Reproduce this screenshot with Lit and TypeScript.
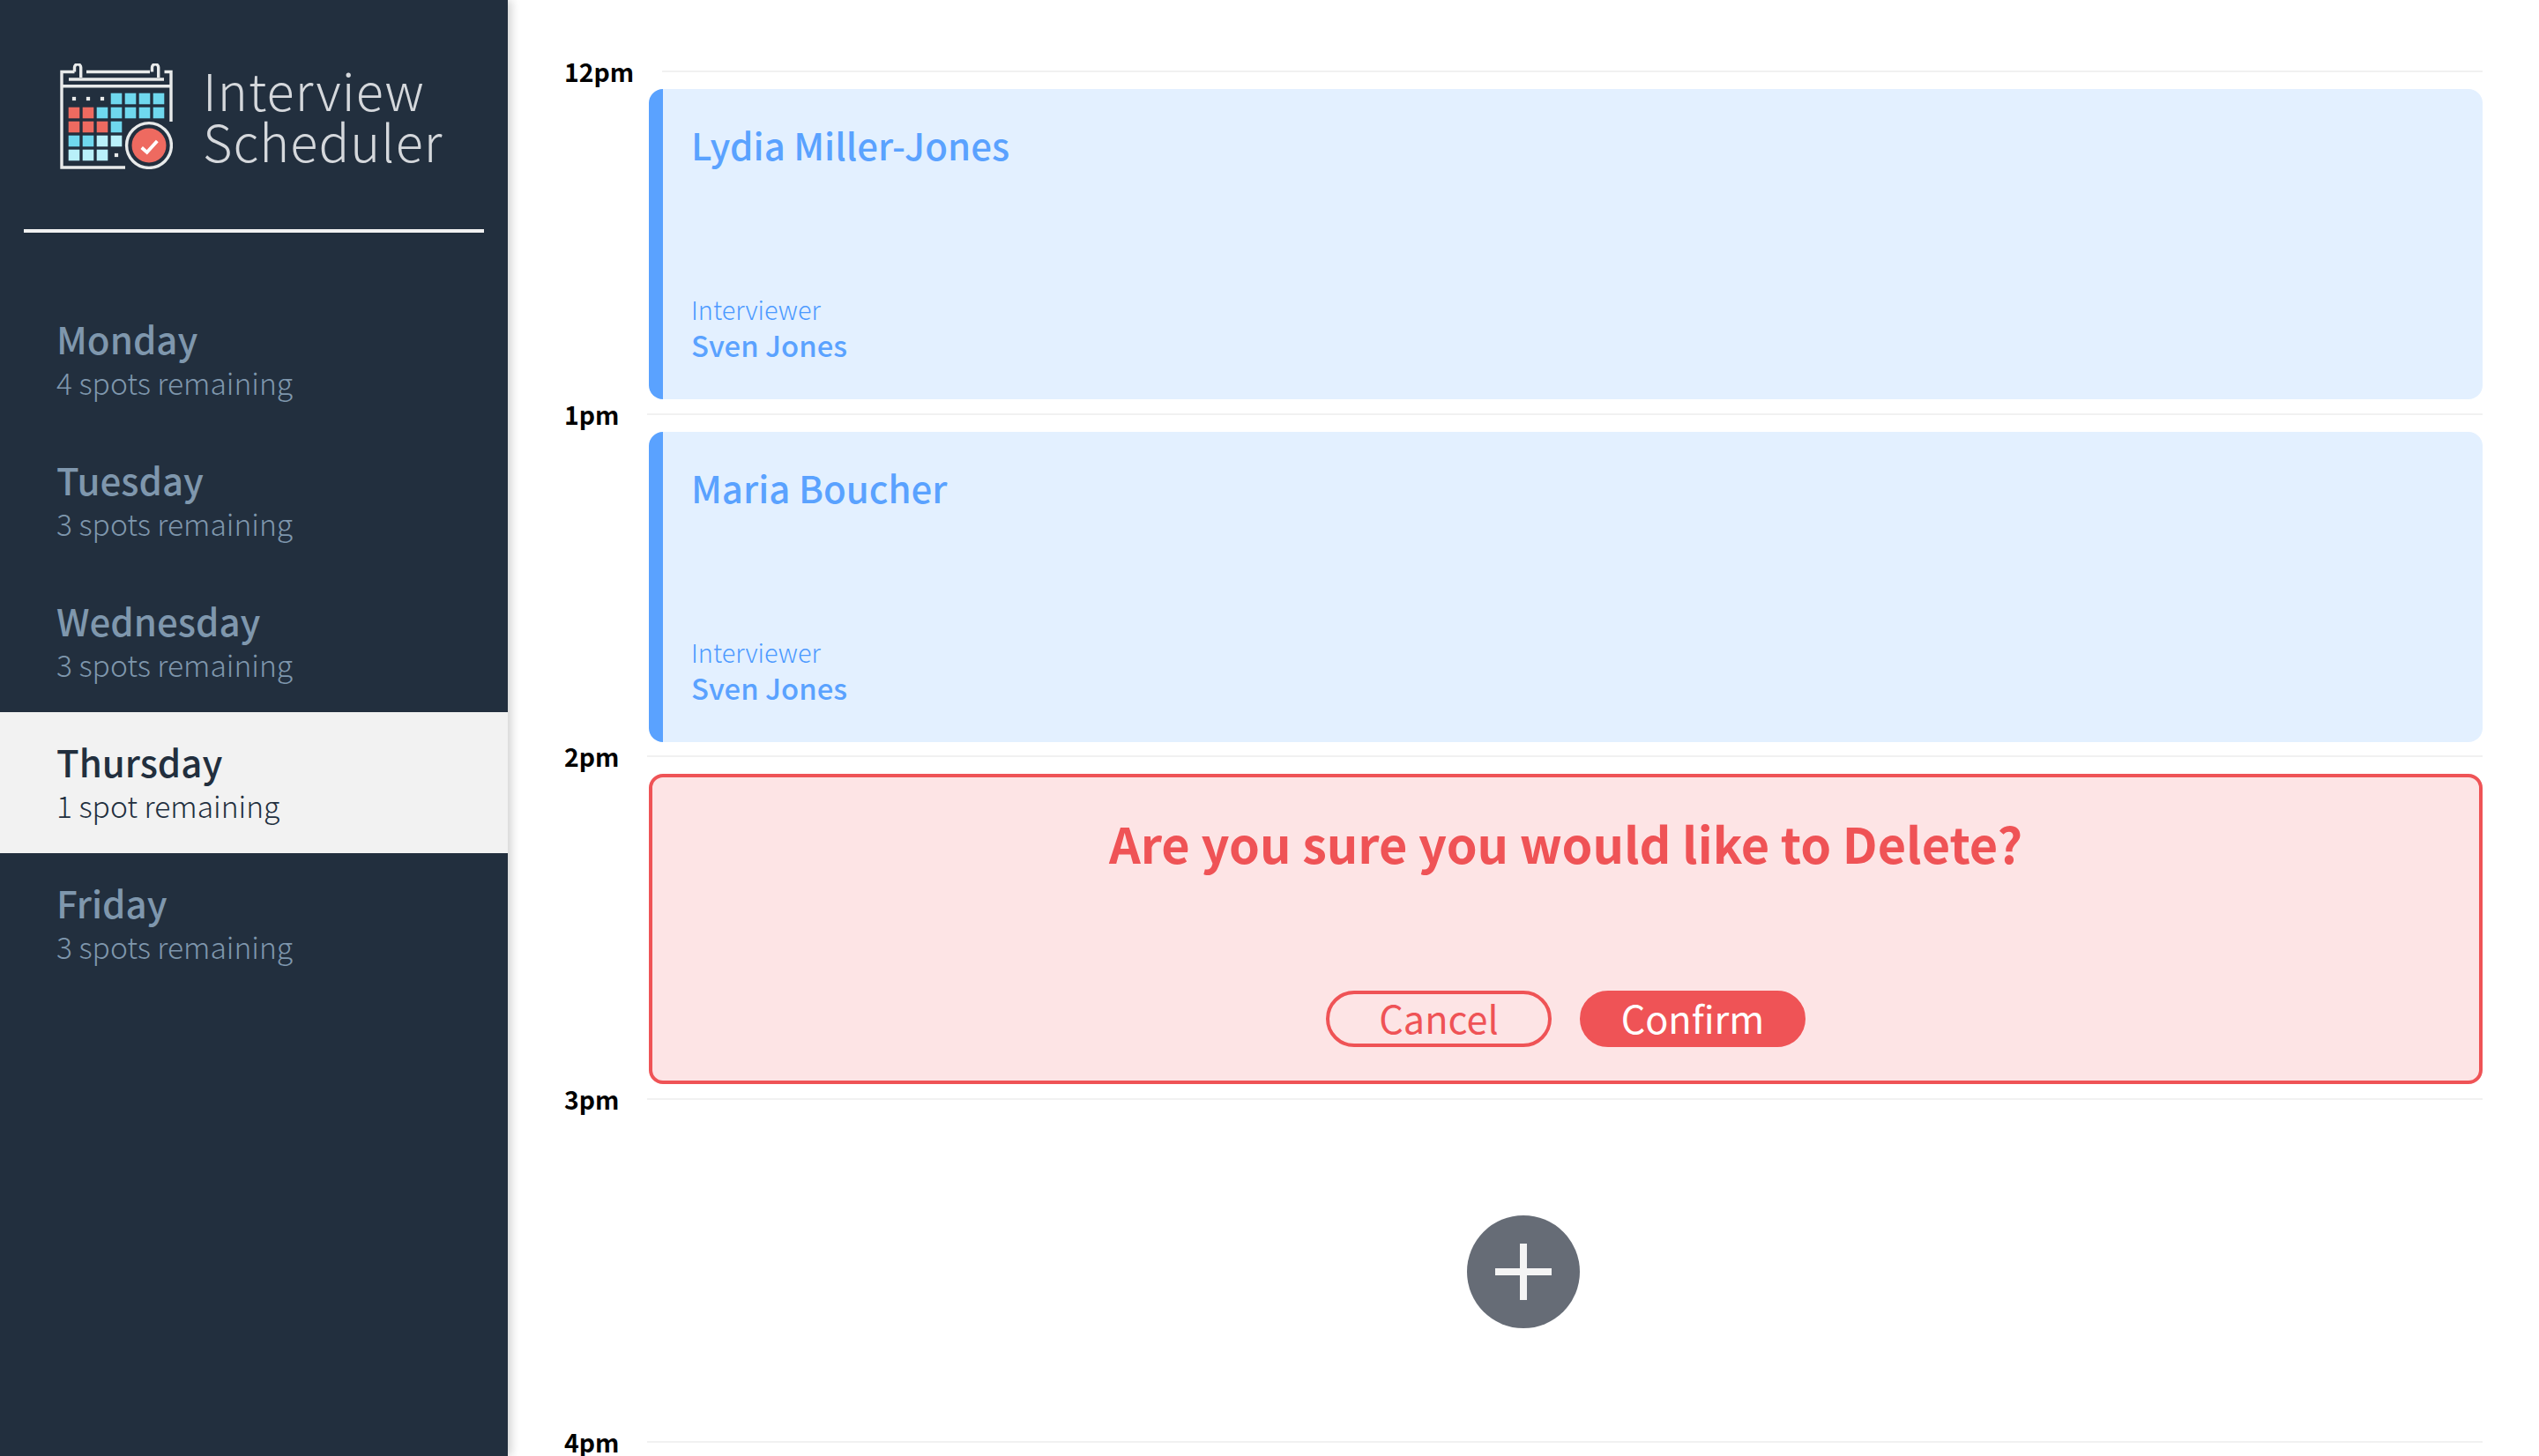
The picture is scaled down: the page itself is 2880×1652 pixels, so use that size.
import { css, html, LitElement, svg } from "lit";
import { customElement } from "lit/decorators.js";

const BLUE = "#6fd8ee";
const RED = "#ee6a60";
const LIGHT = "#b9f0fa";
const FRAME = "#e8eaea";

// d = dot, otherwise a fill colour; null leaves the cell empty
const GRID: (string | null)[][] = [
  ["d", "d", "d", BLUE, BLUE, BLUE, BLUE],
  [RED, RED, BLUE, BLUE, BLUE, BLUE, BLUE],
  [RED, RED, RED, BLUE, null, null, null],
  [BLUE, BLUE, LIGHT, LIGHT, null, null, null],
  [LIGHT, LIGHT, LIGHT, "d", null, null, null],
];

const DAYS = [
  { name: "Monday", spots: "4 spots remaining" },
  { name: "Tuesday", spots: "3 spots remaining" },
  { name: "Wednesday", spots: "3 spots remaining" },
  { name: "Thursday", spots: "1 spot remaining", selected: true },
  { name: "Friday", spots: "3 spots remaining" },
];

const logo = html`
  <svg class="logo" viewBox="0 0 128 120" width="128" height="120" fill="none">
    <g stroke=${FRAME} stroke-width="3.4">
      <path d="M74 118H2V9.5H16.5" />
      <path d="M30 9.5H102" />
      <path d="M118.5 9.5H126V66" />
      <path d="M10 18H118" />
      <path d="M2 25.7H126" />
      <path d="M16.5 9.5V4.5A3.6 3.6 0 1 1 23.7 4.5V16" />
      <path d="M104.5 9.5V4.5A3.6 3.6 0 1 1 111.7 4.5V16" />
    </g>
    ${GRID.map((row, r) =>
      row.map((cell, c) => {
        const x = 9.7 + c * 16;
        const y = 33.7 + r * 16;
        if (!cell) return null;
        if (cell === "d") {
          return svg`<rect x=${x + 4.2} y=${y + 4.2} width="4.2" height="4.2" fill=${FRAME} />`;
        }
        return svg`<rect x=${x} y=${y} width="12.6" height="12.6" fill=${cell} />`;
      })
    )}
    <circle cx="101" cy="93" r="25.4" stroke=${FRAME} stroke-width="3.4" fill="#222f3e" />
    <circle cx="101" cy="93" r="19.5" fill=${RED} />
    <path d="M92.7 95.5L98.7 100.8L110.3 88" stroke="#fff" stroke-width="3.8" />
  </svg>
`;

@customElement("app-root")
export class AppRoot extends LitElement {
  static styles = css`
    :host {
      display: flex;
      width: 2880px;
      height: 1652px;
      overflow: hidden;
      background: #fff;
      font-family: "Noto Sans CJK SC", "Noto Sans", sans-serif;
      color: #222f3e;
    }

    .sidebar {
      width: 576px;
      flex: none;
      background: #222f3e;
      box-shadow: 4px 0 10px rgba(0, 0, 0, 0.18);
      position: relative;
    }

    .brand {
      display: flex;
      gap: 34px;
      height: 260px;
      padding: 72px 0 0 68px;
      box-sizing: border-box;
    }

    .brand .logo {
      flex: none;
    }

    .brand h1 {
      margin: 0;
      font-size: 57.6px;
      line-height: 58px;
      font-weight: 300;
      letter-spacing: 1.1px;
      color: #d5d8dc;
    }

    .divider {
      height: 4px;
      margin: 0 27px 64px;
      background: #f1f1f1;
    }

    .day {
      height: 160px;
      box-sizing: border-box;
      padding: 28px 0 0 64px;
      color: #7f97ad;
    }

    .day.selected {
      background: #f2f2f2;
      color: #222f3e;
    }

    .day h2 {
      margin: 0;
      font-size: 42px;
      line-height: 56px;
      font-weight: 500;
    }

    .day p {
      margin: 2px 0 0;
      font-size: 33.6px;
      line-height: 40px;
      font-weight: 300;
    }

    .schedule {
      flex: 1;
      padding: 65px 64px 0;
    }

    .slot {
      padding-bottom: 0.5px;
    }

    .slot:last-child {
      margin-top: 0.5px;
    }

    .slot-head {
      display: flex;
      height: 32px;
      margin-bottom: 4px;
    }

    .slot-head h4 {
      margin: 0;
      font-size: 28.4px;
      line-height: 31px;
      font-weight: 700;
      color: #000;
    }

    .slot-head hr {
      flex: 1;
      height: 2px;
      margin: 15px 0 0 32px;
      border: 0;
      background: #f1f1f1;
    }

    .body {
      height: 352px;
      margin-left: 96px;
      box-sizing: border-box;
    }

    .show {
      display: flex;
      flex-direction: column;
      justify-content: space-between;
      padding: 35px 32px 40.6px;
      border-left: 16px solid #5aa2ff;
      border-radius: 16px;
      background: #e3f0ff;
      color: #5aa2ff;
    }

    .show h2 {
      margin: 0;
      font-size: 42px;
      line-height: 56px;
      font-weight: 500;
    }

    .show .label {
      margin: 0;
      font-size: 28.8px;
      line-height: 36px;
      font-weight: 300;
      color: #4c9aff;
    }

    .show .name {
      margin: 1px 0 0;
      font-size: 32.8px;
      line-height: 42px;
      font-weight: 500;
    }

    .confirm {
      display: flex;
      flex-direction: column;
      align-items: center;
      justify-content: space-between;
      padding: 37.6px 0 38px;
      border: 4px solid #ef5356;
      border-radius: 16px;
      background: #fde4e5;
      color: #ef5356;
    }

    .confirm h1 {
      margin: 0;
      font-size: 55.8px;
      line-height: 72px;
      font-weight: 700;
    }

    .actions {
      display: flex;
      gap: 32px;
    }

    .actions button {
      width: 256px;
      height: 64px;
      box-sizing: border-box;
      padding: 0 0 4px;
      border: 4px solid #ef5356;
      border-radius: 32px;
      font: inherit;
      font-size: 43.2px;
      line-height: 48px;
      cursor: pointer;
    }

    .cancel {
      background: transparent;
      color: #ef5356;
    }

    .ok {
      background: #ef5356;
      color: #fff;
    }

    .add {
      display: flex;
      align-items: center;
      justify-content: center;
      padding-right: 96px;
    }

    .add button {
      width: 128px;
      height: 128px;
      padding: 0;
      border: 0;
      border-radius: 50%;
      background: #666c76;
      display: flex;
      align-items: center;
      justify-content: center;
      cursor: pointer;
    }
  `;

  private renderInterview(student: string) {
    return html`
      <div class="body show">
        <h2>${student}</h2>
        <div>
          <p class="label">Interviewer</p>
          <p class="name">Sven Jones</p>
        </div>
      </div>
    `;
  }

  private renderHead(time: string) {
    return html`
      <div class="slot-head">
        <h4>${time}</h4>
        <hr />
      </div>
    `;
  }

  render() {
    return html`
      <aside class="sidebar">
        <div class="brand">
          ${logo}
          <h1>Interview<br />Scheduler</h1>
        </div>
        <div class="divider"></div>
        <nav>
          ${DAYS.map(
            (d) => html`
              <div class="day ${d.selected ? "selected" : ""}">
                <h2>${d.name}</h2>
                <p>${d.spots}</p>
              </div>
            `
          )}
        </nav>
      </aside>
      <main class="schedule">
        <section class="slot">${this.renderHead("12pm")}${this.renderInterview("Lydia Miller-Jones")}</section>
        <section class="slot">${this.renderHead("1pm")}${this.renderInterview("Maria Boucher")}</section>
        <section class="slot">
          ${this.renderHead("2pm")}
          <div class="body confirm">
            <h1>Are you sure you would like to Delete?</h1>
            <div class="actions">
              <button class="cancel">Cancel</button>
              <button class="ok">Confirm</button>
            </div>
          </div>
        </section>
        <section class="slot">
          ${this.renderHead("3pm")}
          <div class="body add">
            <button aria-label="Add">
              <svg viewBox="0 0 64 64" width="64" height="64">
                <path d="M32 0V64M0 32H64" stroke="#f4f4f4" stroke-width="8" />
              </svg>
            </button>
          </div>
        </section>
        <section class="slot">${this.renderHead("4pm")}</section>
      </main>
    `;
  }
}
